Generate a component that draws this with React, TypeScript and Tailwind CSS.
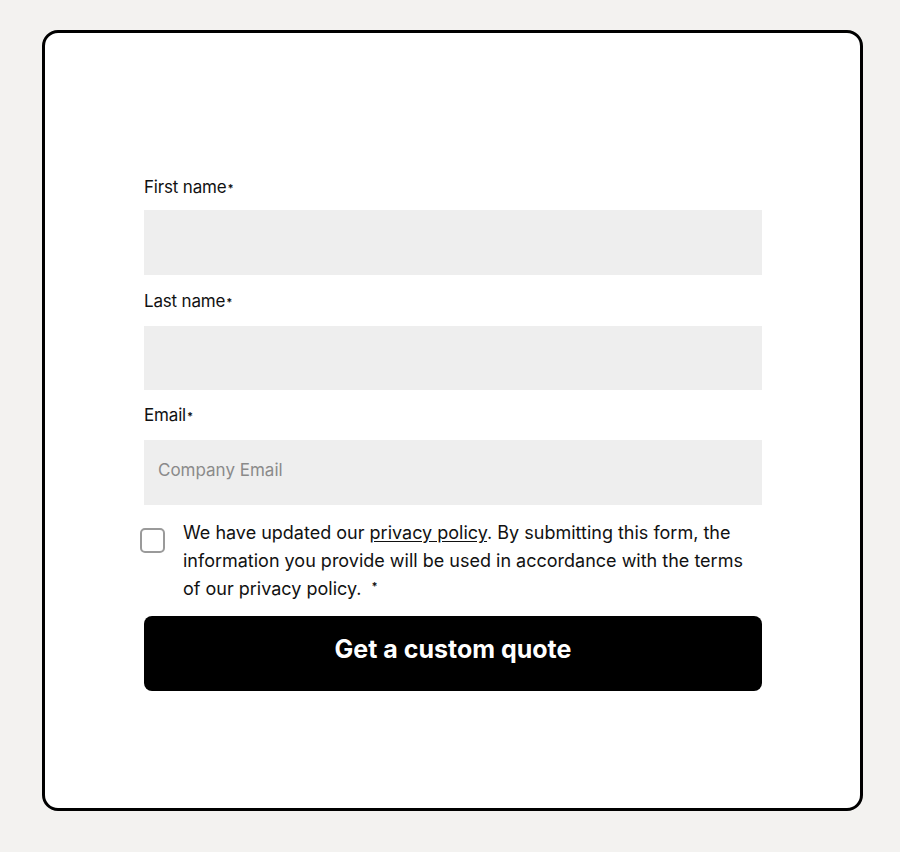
import React from 'react';

const Field: React.FC<{ label: string; placeholder?: string; className?: string; inputClass?: string }> = ({
    label,
    placeholder,
    className = '',
    inputClass = 'h-[65px] mt-[13px]',
}) => (
    <div className={className}>
        <label className="block text-[17px] leading-[20px] tracking-[-0.01em] text-[#111]">
            {label}
            <sup className="text-[11px] font-bold relative -top-[1px] ml-[1px]">*</sup>
        </label>
        <input
            placeholder={placeholder}
            className={`block w-full ${inputClass} bg-[#eeeeee] px-[14px] pb-[6px] text-[17px] text-[#111] placeholder:text-[#8a8a8a] outline-none`}
        />
    </div>
);

export default function App() {
    const [checked, setChecked] = React.useState(false);

    return (
        <div
            className="min-h-[852px] w-[900px] bg-[#f3f2f0] pt-[30px] pl-[42px]"
            style={{ fontFamily: 'Inter, "Liberation Sans", sans-serif' }}
        >
            <div className="w-[821px] h-[781px] rounded-[16px] border-[3px] border-black bg-white pt-[144px] pl-[99px]">
                <form className="w-[618px]" onSubmit={(e) => e.preventDefault()}>
                    <Field label="First name" />
                    <Field label="Last name" className="mt-[16px]" inputClass="h-[64px] mt-[15px]" />
                    <Field label="Email" placeholder="Company Email" className="mt-[15px]" inputClass="h-[65px] mt-[15px]" />

                    <div className="mt-[14px] flex items-start">
                        <button
                            type="button"
                            onClick={() => setChecked(!checked)}
                            className="mt-[9px] ml-[-4px] h-[25px] w-[25px] shrink-0 rounded-[5px] border-2 border-[#9a9a9a] bg-white"
                        />
                        <p className="ml-[18px] w-[575px] text-[18px] leading-[28px] text-[#111]">
                            We have updated our <a className="underline underline-offset-2">privacy policy</a>. By
                            submitting this form, the information you provide will be used in accordance with the terms
                            of our privacy policy.
                            <sup className="ml-[10px] text-[11px] font-bold">*</sup>
                        </p>
                    </div>

                    <button
                        type="submit"
                        className="mt-[13px] h-[75px] w-full rounded-[8px] bg-black pb-[8px] text-[25px] font-bold text-white"
                    >
                        Get a custom quote
                    </button>
                </form>
            </div>
        </div>
    );
}
